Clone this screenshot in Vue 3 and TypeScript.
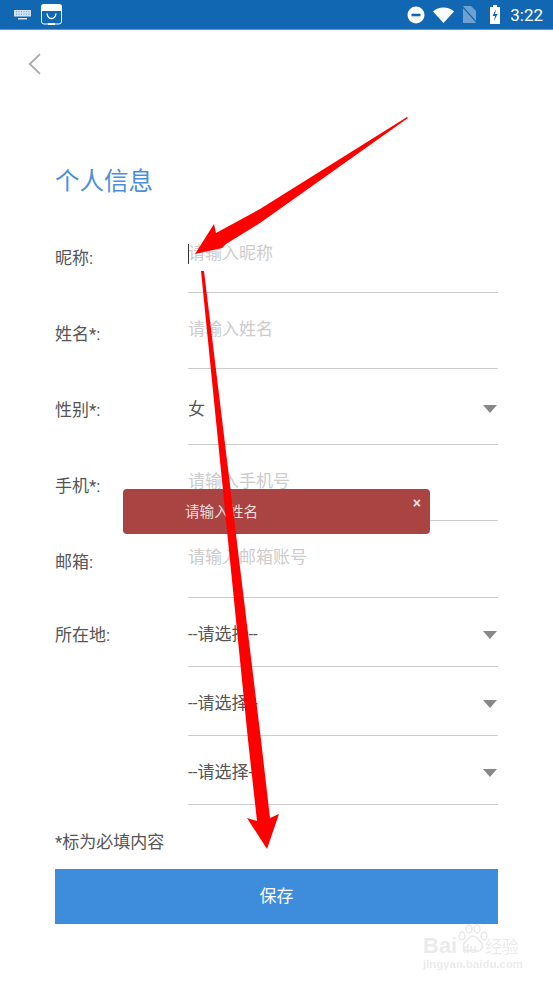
<template>
  <div class="page">
    <div class="status-bar">
      <div class="status-left">
        <svg width="17" height="10" viewBox="0 0 17 10" class="kb"><path fill="#d5e3f1" d="M0 0h17v6.500H0zM4 8h9v1.400H4z"/><path fill="#5f98cc" d="M2 1.200h1v1H2zm2.500 0h1v1h-1zm2.500 0h1v1H7zm2.500 0h1v1h-1zm2.500 0h1v1h-1zm2.500 0h1v1h-1zM2 3.800h1v1H2zm2.500 0h1v1h-1zm2.500 0h1v1H7zm2.500 0h1v1h-1zm2.500 0h1v1h-1zm2.500 0h1v1h-1z"/></svg>
        <svg width="21" height="21" viewBox="0 0 21 21"><path fill="#fff" d="M3 0h15a3 3 0 0 1 3 3v4H0V3a3 3 0 0 1 3-3z"/><rect x=".5" y="1" width="20" height="19" rx="2.500" fill="none" stroke="#fff"/><path fill="none" stroke="#fff" stroke-width="1.300" d="M6 9.500c.5 3.600 2.200 5 4.500 5s4-1.400 4.500-5"/><rect x="7" y="19" width="7" height="2" fill="#fff"/></svg>
      </div>
      <div class="status-right">
        <svg width="18" height="18" viewBox="0 0 18 18"><circle cx="9" cy="9" r="8.500" fill="#fff"/><rect x="4.500" y="7.700" width="9" height="2.600" fill="#1167b1"/></svg>
        <svg width="21" height="16" viewBox="0 0 21 16"><path fill="#fff" d="M0 4.500C2.800 2 6.300.5 10.500.5S18.200 2 21 4.500L10.500 16z"/></svg>
        <svg width="15" height="17" viewBox="0 0 15 17"><path fill="#6ea1d0" d="M1 0h8l5 5v12H1z"/><path stroke="#1167b1" stroke-width="1.200" d="M0 0l15 17"/></svg>
        <svg width="12" height="19" viewBox="0 0 12 19"><path fill="#fff" d="M4 0h4v2h3v17H1V2h3z"/><path fill="#1167b1" d="M7 4L3.500 11H6l-1 5 3.500-7H6z"/></svg>
        <span class="clock">3:22</span>
      </div>
    </div>

    <div class="nav">
      <svg width="14" height="22" viewBox="0 0 14 22"><path d="M13 1.200L2.800 11 13 20.800" fill="none" stroke="#aaa" stroke-width="1.800"/></svg>
    </div>

    <h1 class="title">个人信息</h1>

    <div class="form">
      <div v-for="(row, i) in rows" :key="i" class="row" :class="{ short: row.short }">
        <label class="label">{{ row.label }}</label>
        <div class="field">
          <span v-if="row.caret" class="caret"></span>
          <span v-if="row.value" class="value" :class="{ 'value-low': row.value === '女' }">{{ row.value }}</span>
          <span v-else class="placeholder">{{ row.placeholder }}</span>
          <span v-if="row.value" class="drop"></span>
        </div>
      </div>
    </div>

    <p class="note">*标为必填内容</p>
    <button class="save">保存</button>

    <div class="toast">
      <span>请输入姓名</span>
      <span class="close">×</span>
    </div>

    <svg class="arrows" width="553" height="983" viewBox="0 0 553 983">
      <polygon fill="#ff0000" points="407,117 408,118 260,223 226,244 222,248 195,254 214,224 216,233 260,209" />
      <polygon fill="#ff0000" points="201,271 204,271 261,740 270,818 279,814 267,849 247,818 257,821 248,740" />
    </svg>

    <div class="watermark">
      <svg class="paw" width="30" height="31" viewBox="0 0 30 31">
        <g fill="none" stroke="#e8e8e8" stroke-width="1.500">
          <ellipse cx="4" cy="12" rx="3" ry="4"/><ellipse cx="11" cy="5" rx="3" ry="4"/><ellipse cx="19" cy="5" rx="3" ry="4"/><ellipse cx="26" cy="12" rx="3" ry="4"/>
          <path d="M15 12c4 0 5 4 8 6 3 3 1 9-3 9-2 0-3-1-5-1s-3 1-5 1c-4 0-6-6-3-9 3-2 4-6 8-6z"/>
        </g>
      </svg>
      <div class="wm-top"><span class="wm-bai">Bai</span><span class="wm-du">du</span><span class="wm-cn">经验</span></div>
      <div class="wm-url">jingyan.baidu.com</div>
    </div>
  </div>
</template>

<script setup lang="ts">
interface Row {
  label: string
  placeholder?: string
  value?: string
  caret?: boolean
  short?: boolean
}

const rows: Row[] = [
  { label: '昵称:', placeholder: '请输入昵称', caret: true },
  { label: '姓名*:', placeholder: '请输入姓名' },
  { label: '性别*:', value: '女' },
  { label: '手机*:', placeholder: '请输入手机号' },
  { label: '邮箱:', placeholder: '请输入邮箱账号' },
  { label: '所在地:', value: '--请选择--', short: true },
  { label: '', value: '--请选择--', short: true },
  { label: '', value: '--请选择--', short: true }
]
</script>

<style>
html, body {
  margin: 0;
  background: #fff;
}
</style>

<style scoped>
.page {
  position: relative;
  width: 553px;
  height: 983px;
  overflow: hidden;
  background: #fff;
  font-family: Roboto, "Noto Sans CJK SC", sans-serif;
  font-size: 17px;
  color: #555;
}
.status-bar {
  height: 30px;
  box-sizing: border-box;
  background: #1167b1;
  border-bottom: 1px solid #5b9bd5;
  display: flex;
  align-items: center;
  justify-content: space-between;
  padding: 0 10px 0 14px;
}
.status-left, .status-right {
  display: flex;
  align-items: center;
}
.status-left {
  gap: 10px;
}
.status-right {
  gap: 8px;
}
.status-right svg:nth-child(3) {
  margin-right: 4px;
}
.status-right svg:nth-child(4) {
  margin-right: 1px;
}
.clock {
  font-family: Roboto, sans-serif;
  font-weight: 400;
  font-size: 17px;
  color: #fff;
}
.nav {
  height: 70px;
  box-sizing: border-box;
  padding: 23px 0 0 27px;
}
.nav svg {
  display: block;
}
.title {
  margin: 0;
  height: 117px;
  padding: 64px 0 0 55px;
  box-sizing: border-box;
  font-weight: 400;
  font-size: 24.500px;
  line-height: 36px;
  color: #4a90d9;
}
.form {
  padding: 0 55px;
}
.row {
  display: flex;
  height: 76px;
}
.row:nth-child(5) {
  height: 77px;
}
.row.short {
  height: 69px;
}
.label {
  width: 133px;
  flex: none;
  padding-top: 29px;
  line-height: 24px;
  height: 24px;
}
.row.short .label {
  padding-top: 25px;
}
.field {
  position: relative;
  flex: 1;
  border-bottom: 1px solid #ccc;
  padding-top: 24px;
  line-height: 24px;
}
.placeholder {
  color: #ccc;
}
.value-low {
  position: relative;
  top: 4px;
}
.caret {
  position: absolute;
  left: 0;
  top: 27px;
  width: 1px;
  height: 20px;
  background: #333;
}
.drop {
  position: absolute;
  right: 1px;
  top: 33px;
  width: 0;
  height: 0;
  border-left: 7px solid transparent;
  border-right: 7px solid transparent;
  border-top: 8px solid #888;
}
.row:not(.short) .drop {
  top: 36px;
}
.note {
  margin: 25px 0 0 55px;
  line-height: 24px;
}
.save {
  display: block;
  margin: 15px 0 0 55px;
  padding: 0 0 4px;
  width: 443px;
  height: 55px;
  border: none;
  background: #3e8ddd;
  color: #fff;
  font: inherit;
}
.toast {
  position: absolute;
  left: 123px;
  top: 489px;
  width: 307px;
  height: 45px;
  box-sizing: border-box;
  padding: 11px 0 0 62px;
  background: #a94442;
  border-radius: 4px;
  color: #f2dede;
  font-size: 14.600px;
  line-height: 24px;
}
.close {
  position: absolute;
  right: 9px;
  top: 2px;
  font-family: "Liberation Sans", sans-serif;
  font-size: 14px;
  font-weight: 700;
  color: #f5e6e6;
}
.arrows {
  position: absolute;
  left: 0;
  top: 0;
  pointer-events: none;
}
.watermark {
  position: absolute;
  left: 423px;
  top: 924px;
  width: 120px;
  color: #ebebeb;
  filter: blur(0.4px);
}
.paw {
  position: absolute;
  left: 35px;
  top: 0;
}
.wm-top {
  display: flex;
  align-items: baseline;
  height: 34px;
  padding-top: 9px;
  box-sizing: border-box;
  font-family: "Liberation Sans", sans-serif;
}
.wm-bai {
  font-size: 22px;
  font-weight: 700;
}
.wm-du {
  font-size: 12px;
  font-weight: 700;
  margin: 0 8px 0 5px;
}
.wm-cn {
  font-family: "Noto Sans CJK SC", sans-serif;
  font-size: 17px;
}
.wm-url {
  font-family: "Liberation Sans", sans-serif;
  font-size: 11.400px;
  font-weight: 700;
  white-space: nowrap;
}
</style>
